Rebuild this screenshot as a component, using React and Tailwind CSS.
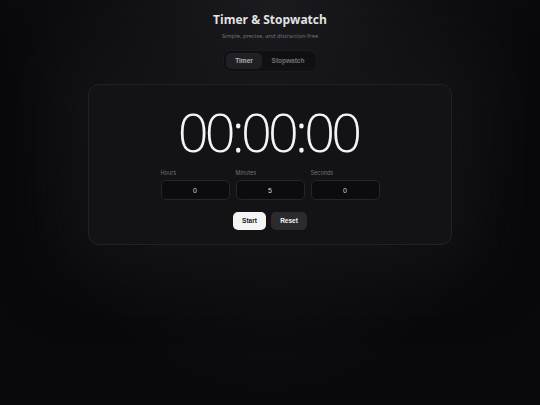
import { useState } from "react";

export default function App() {
  const [mode, setMode] = useState("timer");
  const [hours, setHours] = useState(0);
  const [minutes, setMinutes] = useState(5);
  const [seconds, setSeconds] = useState(0);

  const fields = [
    { label: "Hours", value: hours, set: setHours },
    { label: "Minutes", value: minutes, set: setMinutes },
    { label: "Seconds", value: seconds, set: setSeconds },
  ];

  return (
    <div
      className="min-h-[405px] w-full bg-[#09090b] bg-[radial-gradient(ellipse_at_50%_0%,#1c1c20_0%,#111114_38%,#09090b_72%)] flex flex-col items-center text-white"
      style={{ fontFamily: '"Open Sans", "Noto Sans", sans-serif' }}
    >
      <h1 className="mt-[12px] text-[12px] leading-[16px] font-bold text-[#f4f4f5]">
        Timer &amp; Stopwatch
      </h1>
      <p className="mt-[4px] text-[5.75px] leading-[8px] text-[#8a8a93]">
        Simple, precise, and distraction-free
      </p>

      <div className="mt-[10px] flex rounded-[8px] border border-[#1f1f23] bg-[#0e0e10] p-[2px] font-['Liberation_Sans',sans-serif]">
        <button
          onClick={() => setMode("timer")}
          className={`h-[16px] w-[36px] rounded-[5px] text-[6.5px] font-bold ${
            mode === "timer" ? "bg-[#27272b] text-white" : "text-[#a1a1aa]"
          }`}
        >
          Timer
        </button>
        <button
          onClick={() => setMode("stopwatch")}
          className={`h-[16px] w-[52px] rounded-[5px] text-[6.5px] font-bold ${
            mode === "stopwatch" ? "bg-[#27272b] text-white" : "text-[#a1a1aa]"
          }`}
        >
          Stopwatch
        </button>
      </div>

      <div className="mt-[12px] w-[364px] h-[161px] rounded-[11px] border border-[#222226] bg-[#131316] shadow-[0_0_60px_30px_rgba(22,22,26,0.6)] flex flex-col items-center">
        <div className="mt-[19px] h-[54px] text-[54px] font-extralight leading-none tracking-[-0.07em] text-[#f4f4f5] pr-[4px]">
          00:00:00
        </div>

        <div className="mt-[12px] flex gap-[6px]">
          {fields.map((f) => (
            <label key={f.label} className="flex flex-col w-[69px]">
              <span className="text-[5.5px] leading-[7px] text-[#71717a] font-['Inter',sans-serif]">
                {f.label}
              </span>
              <input
                type="number"
                value={f.value}
                onChange={(e) => f.set(Number(e.target.value))}
                className="mt-[3px] h-[20px] w-full rounded-[5px] border border-[#26262a] bg-[#0c0c0e] text-center text-[7px] text-[#d4d4d8] font-['Liberation_Sans',sans-serif] outline-none [appearance:textfield] [&::-webkit-inner-spin-button]:appearance-none"
              />
            </label>
          ))}
        </div>

        <div className="mt-[12px] flex gap-[5px] font-['Liberation_Sans',sans-serif]">
          <button className="h-[18px] w-[33px] rounded-[5px] bg-[#f4f4f5] text-[6.5px] font-bold text-[#18181b]">
            Start
          </button>
          <button className="h-[18px] w-[36px] rounded-[5px] bg-[#2a2a2f] text-[6.5px] font-bold text-[#f4f4f5]">
            Reset
          </button>
        </div>
      </div>
    </div>
  );
}
